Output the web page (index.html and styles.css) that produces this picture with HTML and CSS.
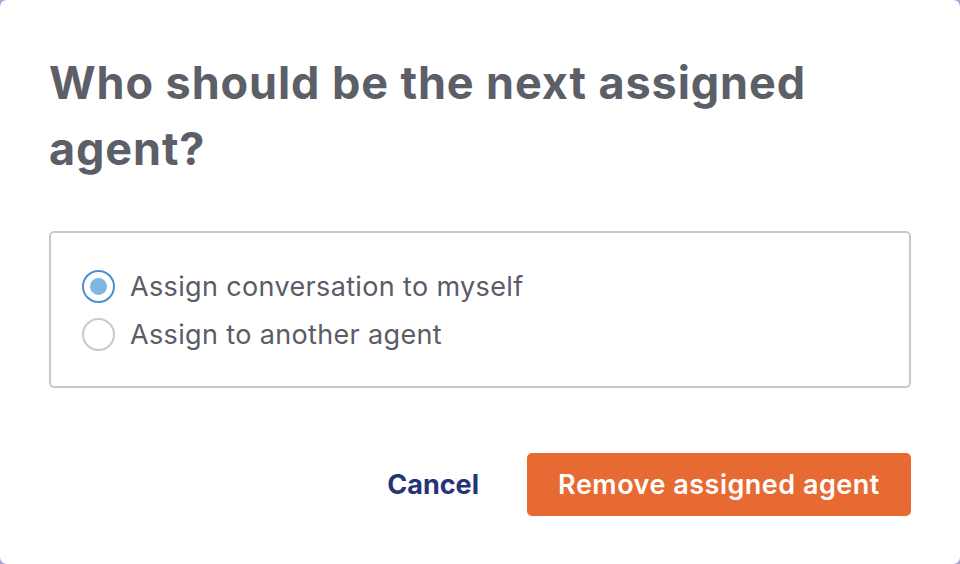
FILE: index.html
```html
<!DOCTYPE html>
<html lang="en">
<head>
<meta charset="utf-8">
<title>Assign agent</title>
<link rel="stylesheet" href="styles.css">
</head>
<body>
<div class="modal">
  <h1 class="title">Who should be the next assigned agent?</h1>
  <div class="options">
    <label class="option">
      <span class="radio radio-checked"><span class="dot"></span></span>
      <span class="option-label">Assign conversation to myself</span>
    </label>
    <label class="option">
      <span class="radio"></span>
      <span class="option-label">Assign to another agent</span>
    </label>
  </div>
  <div class="actions">
    <button class="btn-cancel">Cancel</button>
    <button class="btn-primary">Remove assigned agent</button>
  </div>
</div>
</body>
</html>
```
FILE: styles.css
```css
html, body {
  margin: 0;
  padding: 0;
  width: 960px;
  height: 564px;
  background: #a9a9d6;
  overflow: hidden;
}
body {
  font-family: Inter, "Noto Sans", sans-serif;
}
.modal {
  box-sizing: border-box;
  width: 960px;
  height: 564px;
  background: #ffffff;
  border-radius: 7px;
  padding: 50px 49px 0 49px;
  display: flex;
  flex-direction: column;
}
.title {
  margin: 0;
  font-size: 45px;
  line-height: 66px;
  font-weight: 700;
  color: #5c5e68;
  width: 800px;
  letter-spacing: 0.9px;
}
.options {
  margin-top: 49px;
  height: 157px;
  box-sizing: border-box;
  border: 2px solid #c9c9cd;
  border-radius: 5px;
  padding: 36px 0 0 31px;
  display: flex;
  flex-direction: column;
  gap: 14px;
}
.option {
  display: flex;
  align-items: center;
  gap: 15px;
  height: 34px;
}
.radio {
  box-sizing: border-box;
  width: 33px;
  height: 33px;
  border: 2px solid #c9c9cd;
  border-radius: 50%;
  display: flex;
  align-items: center;
  justify-content: center;
}
.radio-checked {
  border-color: #4a90d0;
}
.dot {
  width: 17px;
  height: 17px;
  border-radius: 50%;
  background: #80b6e2;
}
.option-label {
  font-size: 27px;
  letter-spacing: 0.35px;
  color: #5a5c67;
}
.actions {
  margin-top: 65px;
  display: flex;
  justify-content: flex-end;
  align-items: center;
  gap: 48px;
}
.btn-cancel {
  border: none;
  background: none;
  padding: 0;
  font-family: inherit;
  font-size: 27px;
  font-weight: 700;
  color: #273377;
}
.btn-primary {
  border: none;
  font-family: inherit;
  width: 384px;
  height: 63px;
  border-radius: 5px;
  background: #e86a33;
  color: #ffffff;
  font-size: 27px;
  font-weight: 600;
  letter-spacing: 0.5px;
}
```
